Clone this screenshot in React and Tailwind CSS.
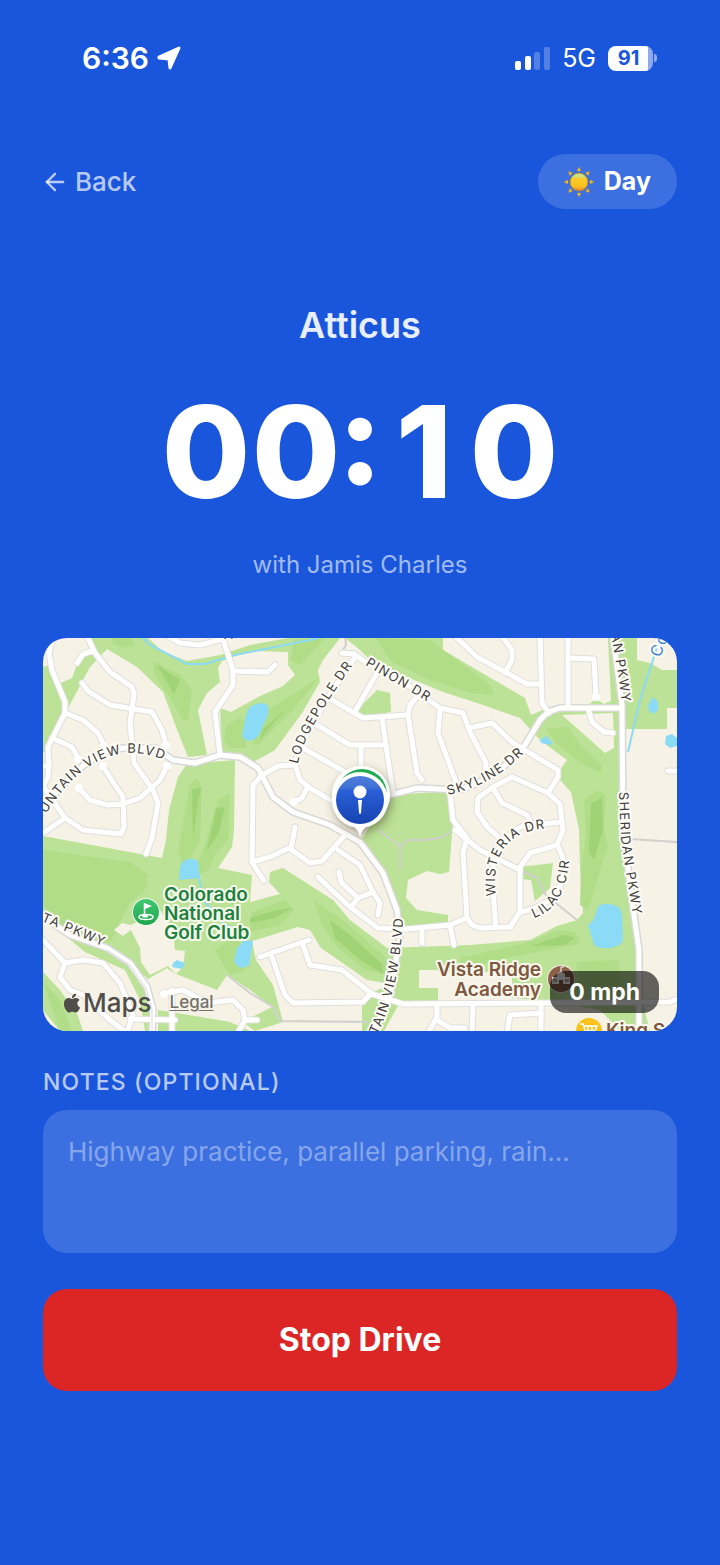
import React, { useState } from 'react';
import { ArrowLeft } from 'lucide-react';
import { FaApple } from 'react-icons/fa';

const parkland = [
  'M91 638H148L163 652L187 661L220 655L250 645L288 638H340L323 660L318 670L320 682L302 713L275 750L250 764L222 755L220 708L231 712L260 696L283 686L295 675L288 665V652L250 651L222 661L218 668L220 682L207 693L198 710L207 755L188 757L176 727L163 692L137 667L107 649L90 667L67 710L48 752H43V667L49 665L61 683L72 678L77 664L91 652Z',
  'M178 777L187 764L235 760L234 830L232 847L218 868L252 875L250 902L280 894L269 882L270 872L283 868L333 900L350 920L387 948L470 945L530 940L557 926L577 920L583 913L580 867L579 830L571 792L560 780L560 770L567 760L540 740L520 718L480 704L443 692L407 677L370 660L360 650L345 638H443V650L482 673L525 698L531 715L545 709L588 705L596 699L604 704L611 701L608 638H637V660L650 663L662 670H677V708H667V729H624L624 830L634 915L640 960L642 1000L650 1031H620L600 1010L540 1000L512 998V985L438 1002H400L384 1031H362V1005L372 993L388 985L380 982L367 980L321 948L310 930L298 927L252 941L256 960L273 985L283 1022L255 1031L240 1020L250 1018L272 1007L250 990L227 975L217 990L176 974L167 968L148 979L140 972L155 1010V1031H145L140 1000L125 970L85 952L43 917V836L162 858L166 840L169 810Z',
  'M377 690L390 693L391 712L366 716L356 711Z',
  'M390 795L440 792L450 794L453 820L449 872L440 874L427 871L408 880L406 898L417 910L448 915V924L400 930L396 905L380 870L361 840Z',
  'M520 867L553 863L550 888L535 901L531 880L521 879Z',
  'M43 972L60 990L78 1016L83 1031H60L43 1010Z',
  'M158 1010L195 1016L230 1022L250 1031H158Z',
];

const cutouts = [
  'M562 715L613 713L614 748L605 753Z',
  'M114 930L122 923L131 925L160 910L173 928L175 950L185 951L183 967L176 974L168 966L150 975L141 962L140 948L131 930L123 936Z',
  'M419 970H438V988H419Z',
  'M438 972H512V1002H438Z',
];

const fairways = [
  'M112 638H132L134 645L123 648L113 644Z',
  'M153 661L180 675L192 690L188 720L183 720L168 695L155 675Z',
  'M226 726L241 717L247 726L246 748L230 748L224 740Z',
  'M294 640L325 638L300 665L290 660Z',
  'M252 745L267 710L300 690L320 677L290 713L268 735L258 745Z',
  'M375 638L430 640L470 670L490 685L494 695L470 693L430 680L392 662Z',
  'M546 728L568 727L580 745L602 765L601 773L580 763L556 743Z',
  'M584 800L598 790L606 796L604 830L608 845L588 910L580 905L581 870L586 835Z',
  'M190 785L197 778L202 788L200 840L184 870L178 850Z',
  'M218 800L230 793L228 840L215 855L208 870L190 880L205 845Z',
  'M43 850L130 862L148 875L145 890L128 905L112 940L95 943L62 925L43 905Z',
  'M252 912L285 900L294 910L280 925L250 932Z',
  'M314 900L345 922L385 957L389 975L365 970L335 945L322 925Z',
  'M460 958L530 942L557 930L576 932L580 944L520 955L460 970Z',
  'M215 950L238 935L245 970L230 975Z',
  'M43 982L60 1000L72 1031H60Z',
  'M576 962L618 960L622 985L580 988Z',
];

const darkFairways = [
  'M157 665L180 680L174 694Z',
  'M192 790L201 787L197 810L193 838Z',
  'M216 808L225 807L218 835L207 850Z',
  'M262 730L285 710L270 727L260 740Z',
  'M591 803L602 798L603 830L594 860L589 852Z',
  'M330 920L350 935L383 965L383 974L360 960L335 938Z',
  'M250 918L277 910L292 908L275 918L250 923Z',
  'M530 946L565 935L575 938L565 945Z',
];

const water = [
  'M247 712C250 704 260 702 266 704C272 708 266 720 262 728C258 742 246 744 242 736C244 728 244 722 247 712Z',
  'M180 868C181 860 190 856 198 861L200 878L179 880Z',
  'M244 940L253 941L249 966L240 968L234 962L237 948Z',
  'M173 963L177 960L185 963L182 969L172 967Z',
  'M588 925C597 920 595 908 600 905C610 902 622 905 622 915L623 940C620 950 598 950 594 945Z',
  'M648 705L653 697L658 702L658 710L654 714L649 711Z',
  'M540 740L546 736L553 743L550 745L541 743Z',
  'M666 736L672 734L677 738V746L670 748L665 744Z',
];

const streets = [
  'M53 638L49 653L52 670L65 702V713L48 747L49 765L48 777L43 786L65 818L83 830L121 834L124 827L123 797L102 765',
  'M65 818L43 833',
  'M43 766H49',
  'M87 636L95 653L110 672L132 687L134 694L130 723L134 763L153 790L158 803L152 838L146 854',
  'M93 651L83 654L77 663',
  'M82 683L88 691L110 705L152 712L162 730L166 745',
  'M65 713L83 720L98 733L105 747',
  'M52 738L72 747L78 758',
  'M79 788L90 800L107 805L123 804L140 798L160 780L167 766',
  'M220 755L215 712L233 685V670L222 636',
  'M233 671L260 672',
  'M168 636L180 643L200 645L222 639',
  'M250 671L268 672L275 665',
  'M262 775L253 785L252 862L264 881',
  'M252 862L270 857L289 848L310 863L322 861L345 835',
  'M295 827L291 848',
  'M262 775L278 766L295 765L300 780L310 788L332 801',
  'M307 788L302 798L294 802',
  'M295 765C300 740 325 700 356 656',
  'M342 653L354 654L365 662L400 680L440 708L463 713L470 732L486 763L485 775',
  'M377 673L354 713',
  'M332 700L363 718L408 715L410 705L417 697',
  'M408 715L417 773L422 780',
  'M382 718L393 793',
  'M317 725L350 745L384 745',
  'M361 746V770',
  'M303 748L347 773',
  'M440 710L438 733L457 785',
  'M450 793L453 820L467 838L463 853L467 918L472 925L480 928L510 927L520 912V867L530 853L557 845L563 830L560 804L548 793L512 777L493 787L478 798L477 812L488 828L500 838',
  'M318 877L350 907L378 928L407 929L450 925L467 918',
  'M422 928V943',
  'M450 925L454 945',
  'M338 850L360 865L373 892L380 903L378 915',
  'M339 872L341 882L358 898L373 892',
  'M358 898L352 906',
  'M455 636L477 657L507 673L527 684H541',
  'M502 636L512 650V660L505 673',
  'M540 636L542 703L549 713',
  'M568 636V707',
  'M568 658L594 659L596 695',
  'M588 708L592 722L604 732L613 733',
  'M469 728L492 723L513 743L558 770V777L548 793',
  'M493 788L502 803L527 815L532 825L562 822',
  'M530 823C505 832 493 850 492 880L496 927',
  'M455 830L480 850L520 870',
  'M557 845C573 870 562 905 520 912',
  'M668 771H680',
  'M372 994L403 1004L670 1002L680 998',
  'M260 957L309 940',
  'M272 957L285 995L293 1003L363 1002L371 993',
  'M302 942L310 965L342 970L372 994',
  'M437 1004V1017L428 1033',
  'M437 1020L450 1028H465',
  'M473 1004L472 1033',
  'M541 1003V1033',
  'M541 1013L510 1015L507 1033',
  'M43 940L65 963L83 960L103 963L120 983L133 1015L127 1033',
  'M65 963L60 977L70 990L83 995L110 1020L127 1033',
  'M130 1019L175 1020',
  'M172 990V1033',
  'M163 993L183 990L207 1003L233 1000L243 1010L245 1020H257',
  'M245 1020L238 1033',
];

const mainRoads = [
  'M43 808C60 790 85 752 123 748L155 748L173 760L195 763L220 755L240 757L258 768L273 797L293 812L330 825L360 842L383 873L397 910L400 937L390 997L373 1033',
  'M390 795L417 788L460 790C490 780 505 768 525 745L540 720L548 712L560 708H622',
  'M613 636L622 705L623 830L634 915L639 950V1033',
  'M43 917L70 935L107 948L130 963L147 987L153 1010L152 1033',
];

const footpaths = [
  'M345 636L346 645L342 652',
  'M378 830L392 840L400 846L408 840L425 840L440 838L450 832',
  'M400 846V868',
  'M520 870L537 878L546 895L577 920',
  'M227 975L250 993L273 1007L280 1021L367 1022',
  'M630 839L677 842',
];

const culDeSacs = [
  [166, 745], [104, 746], [78, 759], [103, 766], [79, 788], [167, 766], [294, 802], [596, 697], [164, 994],
];

const roadLabels = [
  { id: 'mtn-west', d: 'M46 814C70 776 95 757 125 753C145 752 156 756 190 770', text: 'UNTAIN VIEW BLVD' },
  { id: 'lodgepole', d: 'M298 764C303 738 324 705 362 652', text: 'LODGEPOLE DR' },
  { id: 'pinon', d: 'M365 665L445 712', text: 'PINON DR' },
  { id: 'skyline', d: 'M448 795C480 788 508 773 538 738', text: 'SKYLINE DR' },
  { id: 'sheridan-n', d: 'M611 634L619 680L624 720', text: 'AN PKWY' },
  { id: 'sheridan-s', d: 'M619 792L621 840L636 935', text: 'SHERIDAN PKWY' },
  { id: 'wisteria', d: 'M496 896C490 852 510 829 552 828', text: 'WISTERIA DR' },
  { id: 'lilac', d: 'M534 918C558 910 570 888 570 840', text: 'LILAC CIR' },
  { id: 'vista', d: 'M41 921L120 953', text: 'TA PKWY' },
  { id: 'mtn-south', d: 'M377 1035C394 1000 404 955 404 880', text: 'TAIN VIEW BLVD' },
];

const Map = () => (
  <svg viewBox="43 638 634 393" className="block w-full h-auto" role="img" aria-label="Current location">
    <defs>
      <linearGradient id="pinBlue" x1="0" y1="0" x2="0" y2="1">
        <stop offset="0" stopColor="#4f7fdd" />
        <stop offset="0.25" stopColor="#4070d2" />
        <stop offset="0.3" stopColor="#2a5fd8" />
        <stop offset="1" stopColor="#1743b0" />
      </linearGradient>
      <linearGradient id="golfGreen" x1="0" y1="0" x2="0" y2="1">
        <stop offset="0" stopColor="#43c873" />
        <stop offset="1" stopColor="#1ea64c" />
      </linearGradient>
      <filter id="pinShadow" x="-50%" y="-50%" width="200%" height="200%">
        <feDropShadow dx="2" dy="4" stdDeviation="5" floodColor="#3f3a20" floodOpacity="0.5" />
      </filter>
      {roadLabels.map((l) => (
        <path key={l.id} id={l.id} d={l.d} />
      ))}
    </defs>

    <rect x="43" y="638" width="634" height="393" fill="#f6f2e6" />
    <g fill="#bbe297">{parkland.map((d) => <path key={d} d={d} />)}</g>
    <g fill="#b1dd88">{fairways.map((d) => <path key={d} d={d} />)}</g>
    <g fill="#a0d375">{darkFairways.map((d) => <path key={d} d={d} />)}</g>
    <g fill="#f6f2e6">{cutouts.map((d) => <path key={d} d={d} />)}</g>
    <g fill="#8cdbf6">{water.map((d) => <path key={d} d={d} />)}</g>
    <g fill="none" stroke="#8cdbf6" strokeWidth="2">
      <path d="M141 636L150 645L187 664L205 664L235 655L270 648L290 644L310 640L325 636" />
      <path d="M660 638L640 700L628 752" />
      <path d="M199 878L203 900L225 925L240 930" />
    </g>

    <g fill="none" strokeLinecap="round" strokeLinejoin="round">
      <g stroke="#d2d0cf" strokeWidth="2">{footpaths.map((d) => <path key={d} d={d} />)}</g>
      <g stroke="#e0dfdd" strokeWidth="7">{streets.map((d) => <path key={d} d={d} />)}</g>
      <g stroke="#d9d8d7" strokeWidth="8">{mainRoads.map((d) => <path key={d} d={d} />)}</g>
      <g stroke="#fff" strokeWidth="5">{streets.map((d) => <path key={d} d={d} />)}</g>
      <g stroke="#fff" strokeWidth="5">{mainRoads.map((d) => <path key={d} d={d} />)}</g>
    </g>
    <path d="M107 950L130 965L146 988L152 1010V1031" fill="none" stroke="#dddcdb" />
    <g fill="#fff">
      {culDeSacs.map(([cx, cy]) => (
        <circle key={`${cx}-${cy}`} cx={cx} cy={cy} r="4" />
      ))}
    </g>

    <g
      className="font-['Inter',sans-serif] text-[13px] tracking-widest"
      fill="#3f3e3c"
      stroke="#fdfbf5"
      strokeWidth="4"
      strokeLinejoin="round"
      paintOrder="stroke"
    >
      {roadLabels.map((l) => (
        <text key={l.id}>
          <textPath href={`#${l.id}`}>{l.text}</textPath>
        </text>
      ))}
      <text transform="translate(660 658) rotate(-68)" className="text-[16px]" fill="#3f86d8">Co</text>
      <text x="224" y="639">A</text>
    </g>

    {/* golf club */}
    <circle cx="146" cy="912" r="14" fill="#f3f8ec" />
    <circle cx="146" cy="912" r="13" fill="url(#golfGreen)" />
    <path d="M144 903L152 906L145 909Z" fill="#fff" />
    <path d="M144.500 903V917" stroke="#fff" strokeWidth="1.500" />
    <ellipse cx="146" cy="917" rx="7" ry="2.500" fill="none" stroke="#fff" strokeWidth="1.500" />
    <ellipse cx="145" cy="916" rx="3" ry="1.500" fill="#fff" />

    {/* school */}
    <circle cx="561" cy="979" r="14" fill="#f3ece4" />
    <circle cx="561" cy="979" r="13" fill="#8b6047" />
    <path d="M552 984V977H557V974L561 971L565 974V977H570V984H563V980H559V984Z" fill="#fff" />
    <path d="M561 971V967H564" stroke="#fff" fill="none" />
    <path d="M554 979V982M556 979V982M566 979V982M568 979V982" stroke="#8b6047" />

    {/* grocery */}
    <circle cx="589" cy="1031" r="14" fill="#faf3dc" />
    <circle cx="589" cy="1031" r="13" fill="#f8c21c" />
    <path d="M580 1024H583L586 1033H596M584 1026H597L595 1031H586M588 1026V1031M592 1026V1031" fill="none" stroke="#fff" strokeWidth="1.500" />

    <g
      className="font-['Inter',sans-serif] text-[19px] font-semibold"
      stroke="#f7f8ec"
      strokeWidth="4"
      strokeLinejoin="round"
      paintOrder="stroke"
    >
      <g fill="#1e8140">
        <text x="164" y="901">Colorado</text>
        <text x="164" y="920">National</text>
        <text x="164" y="939">Golf Club</text>
      </g>
      <g fill="#805740">
        <text x="541" y="976" textAnchor="end">Vista Ridge</text>
        <text x="541" y="996" textAnchor="end">Academy</text>
        <text x="606" y="1037">King S</text>
      </g>
    </g>

    {/* start marker peeking out behind the current position */}
    <g filter="url(#pinShadow)">
      <circle cx="361" cy="795" r="29" fill="#fff" />
      <circle cx="362" cy="794" r="25" fill="#22ab50" />
      <path d="M352 825Q358 829 360 836Q362 829 368 825Z" fill="#fff" />
      <circle cx="360" cy="800" r="28" fill="#fff" />
    </g>
    <circle cx="360" cy="800" r="24" fill="url(#pinBlue)" />
    <circle cx="360" cy="792" r="6.500" fill="#fff" />
    <path d="M358 800H362L361 813Q360 815 359 813Z" fill="#fff" />
  </svg>
);

const Sun = () => (
  <svg viewBox="0 0 30 30" className="w-[30px] h-[30px]" aria-hidden="true">
    <defs>
      <linearGradient id="sunFill" x1="0" y1="0" x2="0" y2="1">
        <stop offset="0" stopColor="#c9e58c" />
        <stop offset="0.22" stopColor="#cfe07c" />
        <stop offset="0.28" stopColor="#f8cb2b" />
        <stop offset="0.75" stopColor="#fbc11e" />
        <stop offset="1" stopColor="#ee7a35" />
      </linearGradient>
    </defs>
    {[0, 45, 90, 135, 180, 225, 270, 315].map((a) => (
      <path key={a} d="M15 0L17 4H13Z" fill="#fbc42a" stroke="#a5893f" strokeWidth="0.400" transform={`rotate(${a} 15 15)`} />
    ))}
    <circle cx="15" cy="15" r="9" fill="url(#sunFill)" stroke="#a5893f" strokeWidth="1" />
  </svg>
);

const StatusBar = () => (
  <div className="flex items-center justify-between pl-[82px] pr-[63px] pt-10 text-white">
    <div className="flex items-center gap-2">
      <span className="text-[30px] leading-9 font-semibold">6:36</span>
      <svg viewBox="0 0 24 24" className="w-6 h-6" fill="#fff" stroke="#fff" strokeWidth="3" strokeLinejoin="round" aria-hidden="true">
        <path d="M2 11L22 2L13 22L12 13L2 12Z" />
      </svg>
    </div>
    <div className="flex items-center gap-3">
      <svg viewBox="0 0 35 23" className="w-[35px] h-[23px]" fill="#fff" aria-hidden="true">
        <rect x="0" y="14" width="6" height="9" rx="2" />
        <rect x="10" y="9" width="6" height="14" rx="2" />
        <rect x="19" y="5" width="6" height="18" rx="2" opacity="0.25" />
        <rect x="29" y="0" width="6" height="23" rx="2" opacity="0.25" />
      </svg>
      <span className="text-[25px] leading-8">5G</span>
      <div className="flex items-center gap-px">
        <span className="w-[45px] rounded-lg bg-linear-to-r from-white from-90% to-white/50 to-90% pr-1 text-center text-[20px] leading-[25px] font-bold text-[#1a56db]">
          91
        </span>
        <span className="w-[3px] h-2 rounded-r-full bg-white/50" />
      </div>
    </div>
  </div>
);

const Timer = ({ value }) => (
  <div className="mt-7 flex justify-center text-[128px] leading-[150px] font-extrabold text-white [font-feature-settings:'case']">
    {value.split('').map((char, i) => (
      <span key={i} className={char === ':' ? 'flex w-[38px] justify-center' : 'w-[90px] text-center'}>
        {char}
      </span>
    ))}
  </div>
);

export default function App() {
  const [notes, setNotes] = useState('');
  const [isDay, setIsDay] = useState(true);

  return (
    <div className="min-h-screen bg-[#1a56db] font-['Inter',sans-serif]">
      <StatusBar />

      <main className="px-[43px] pt-[78px] pb-16">
        <div className="flex items-center justify-between">
          <button type="button" className="flex items-center gap-1 text-[26px] leading-8 font-medium text-white/70">
            <ArrowLeft size={28} strokeWidth={2} className="-ml-1 w-8" />
            Back
          </button>
          <button
            type="button"
            onClick={() => setIsDay(!isDay)}
            className="flex items-center gap-[10px] rounded-full bg-white/15 px-[26px] h-[55px] text-[25px] font-bold text-white"
          >
            <Sun />
            {isDay ? 'Day' : 'Night'}
          </button>
        </div>

        <div className="mt-[92px] text-center">
          <h1 className="text-[36px] leading-12 font-semibold text-white/90">Atticus</h1>
          <Timer value="00:10" />
          <p className="mt-[22px] text-[24px] leading-8 text-white/60">with Jamis Charles</p>
        </div>

        <div className="relative mt-[57px] overflow-hidden rounded-3xl">
          <Map />
          <div className="absolute bottom-3 left-[18px] flex items-center gap-[18px] text-[#4f4e4b]">
            <span className="flex items-center text-[26px] leading-8 font-medium">
              <FaApple size={22} />
              Maps
            </span>
            <a href="#legal" className="text-[17px] font-medium text-[#73716b] underline underline-offset-2">
              Legal
            </a>
          </div>
          <div className="absolute bottom-[18px] right-[18px] rounded-2xl bg-black/60 px-[19px] text-[23px] leading-[42px] font-bold text-white">
            0 mph
          </div>
        </div>

        <label htmlFor="notes" className="mt-[35px] block text-[23px] leading-8 font-medium tracking-wider text-white/70">
          NOTES (OPTIONAL)
        </label>
        <textarea
          id="notes"
          value={notes}
          onChange={(e) => setNotes(e.target.value)}
          placeholder="Highway practice, parallel parking, rain..."
          className="mt-3 block w-full h-[143px] resize-none rounded-3xl bg-white/15 px-[25px] py-6 text-[26px] leading-9 text-white placeholder:text-white/40 outline-none"
        />

        <button type="button" className="mt-9 h-[102px] w-full rounded-3xl bg-[#dc2626] text-[32px] font-bold text-white">
          Stop Drive
        </button>
      </main>
    </div>
  );
}
